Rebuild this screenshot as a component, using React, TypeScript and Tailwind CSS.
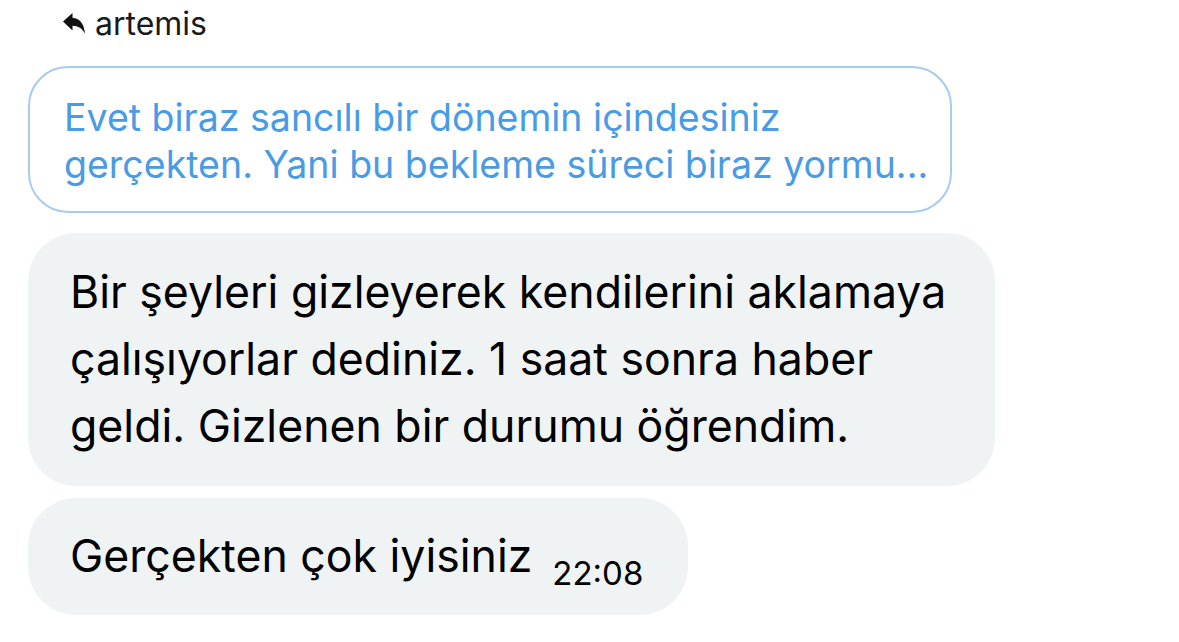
import React from "react";

function ReplyArrow() {
  return (
    <svg width="22" height="21" viewBox="0 0 22 21" className="shrink-0">
      <path
        d="M0 8.5 L9.5 0 L9.5 4.8 C16.5 5.2 21 10.5 22 20.5 C19 15.5 15.5 13 9.5 12.8 L9.5 17.5 Z"
        fill="#111"
      />
    </svg>
  );
}

export default function App() {
  return (
    <div
      className="w-[1179px] h-[642px] bg-white overflow-hidden"
      style={{ fontFamily: "Inter, 'Noto Sans', sans-serif" }}
    >
      {/* reply header */}
      <div className="flex items-center gap-[10px] pl-[63px] pt-[9px] h-[38px]">
        <ReplyArrow />
        <span className="text-[32px] leading-none text-[#1a1a1a]">artemis</span>
      </div>

      <div className="pl-[28px] pt-[28px] flex flex-col items-start">
        {/* quoted message */}
        <div className="w-[924px] h-[147px] rounded-[40px] border-2 border-[#a7cbee] pl-[34px] pt-[26px]">
          <p className="text-[37.5px] leading-[47px] text-[#4a9be4] whitespace-nowrap">
            Evet biraz sancılı bir dönemin içindesiniz
            <br />
            gerçekten. Yani bu bekleme süreci biraz yormu...
          </p>
        </div>

        {/* message 1 */}
        <div className="mt-[20px] w-[967px] h-[253px] rounded-[48px] bg-[#eff3f4] pl-[42px] pt-[26px]">
          <p className="text-[44.6px] leading-[67px] text-black whitespace-nowrap">
            Bir şeyleri gizleyerek kendilerini aklamaya
            <br />
            çalışıyorlar dediniz. 1 saat sonra haber
            <br />
            geldi. Gizlenen bir durumu öğrendim.
          </p>
        </div>

        {/* message 2 */}
        <div className="mt-[12px] w-[660px] h-[117px] rounded-[48px] bg-[#eff3f4] pl-[42px] flex items-center">
          <span className="text-[44.6px] text-black leading-none">Gerçekten çok iyisiniz</span>
          <span className="ml-[20px] mt-[34px] text-[33px] text-black leading-none">22:08</span>
        </div>
      </div>
    </div>
  );
}
